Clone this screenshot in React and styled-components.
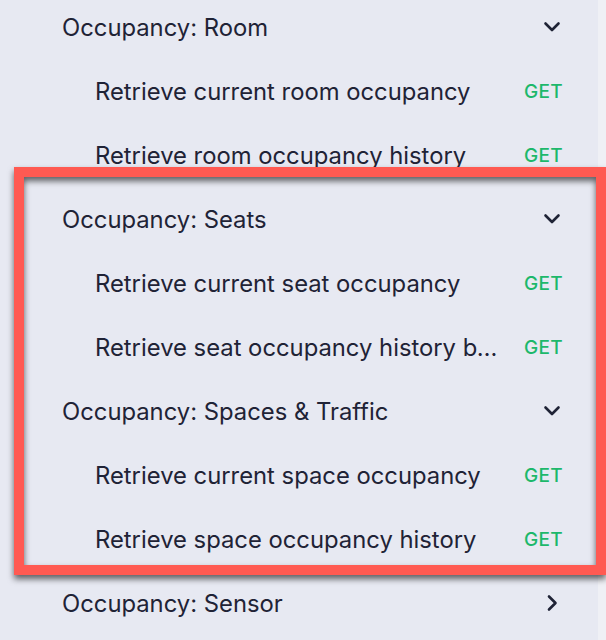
import React from "react";
import styled, { createGlobalStyle } from "styled-components";

const Global = createGlobalStyle`
  html, body { margin: 0; padding: 0; background: #eff0f5; }
  body { font-family: Inter, "Noto Sans", sans-serif; overflow: hidden; }
`;

const Page = styled.div`
  position: relative;
  width: 606px;
  height: 640px;
  overflow: hidden;
  background: #eff0f5;
`;

const Sidebar = styled.nav`
  width: 598px;
  height: 645px;
  background: #e7e9f2;
  display: flex;
  flex-direction: column;
  margin-top: -5px;
`;

const Row = styled.div`
  height: 64px;
  flex: none;
  display: flex;
  align-items: center;
  padding-left: ${(p) => (p.$sub ? 95 : 62)}px;
  padding-right: 35px;
  gap: 22px;
  color: #1f2336;
  font-size: 23.8px;
`;

const Label = styled.span`
  flex: 1;
  min-width: 0;
  white-space: nowrap;
  overflow: hidden;
  text-overflow: ellipsis;
`;

const Method = styled.span`
  color: #1db86b;
  font-size: 19px;
  font-weight: 500;
  letter-spacing: 0.3px;
`;

const Icon = styled.svg`
  width: 20px;
  height: 20px;
  flex: none;
  margin-right: 1px;
`;

const Highlight = styled.div`
  position: absolute;
  left: 14px;
  top: 167px;
  width: 592px;
  height: 408px;
  box-sizing: border-box;
  border: 10px solid #ff5a52;
  pointer-events: none;
  filter: drop-shadow(0 4px 3px rgba(0, 0, 0, 0.6));
`;

const Chevron = ({ dir }) => (
  <Icon viewBox="0 0 20 20" fill="none" stroke="#1f2336" strokeWidth="2.6" strokeLinecap="round" strokeLinejoin="round">
    {dir === "down" ? <polyline points="3.5,6.5 10,13 16.5,6.5" /> : <polyline points="7,3.5 13.5,10 7,16.5" />}
  </Icon>
);

const groups = [
  { title: "Occupancy: Room", open: true, items: ["Retrieve current room occupancy", "Retrieve room occupancy history"] },
  { title: "Occupancy: Seats", open: true, items: ["Retrieve current seat occupancy", "Retrieve seat occupancy history by seat"] },
  { title: "Occupancy: Spaces & Traffic", open: true, items: ["Retrieve current space occupancy", "Retrieve space occupancy history"] },
  { title: "Occupancy: Sensor", open: false, items: [] },
];

export default function App() {
  return (
    <Page>
      <Global />
      <Sidebar>
        {groups.map((g) => (
          <React.Fragment key={g.title}>
            <Row>
              <Label>{g.title}</Label>
              <Chevron dir={g.open ? "down" : "right"} />
            </Row>
            {g.open &&
              g.items.map((it) => (
                <Row $sub key={it}>
                  <Label>{it}</Label>
                  <Method>GET</Method>
                </Row>
              ))}
          </React.Fragment>
        ))}
      </Sidebar>
      <Highlight />
    </Page>
  );
}
